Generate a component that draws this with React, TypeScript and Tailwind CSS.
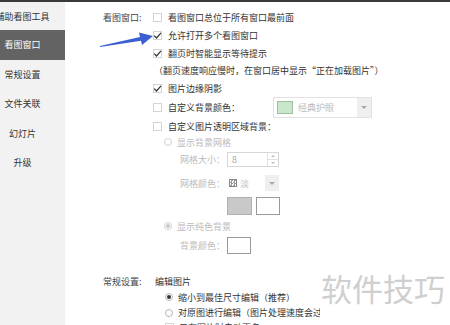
import React from "react";

const font = { fontFamily: '"Noto Sans CJK SC", "Noto Sans", sans-serif' };

const Check = ({ on = false }: { on?: boolean }) => (
    <span className="w-[9px] h-[9px] border border-[#d4d4d4] bg-white shrink-0 flex items-center justify-center">
        {on && (
            <svg width="9" height="9" viewBox="0 0 9 9" className="overflow-visible">
                <polyline points="1.2,4.6 3.5,7 8,1.8" fill="none" stroke="#333" strokeWidth="1.2" />
            </svg>
        )}
    </span>
);

const Radio = ({ on = false, dim = false }: { on?: boolean; dim?: boolean }) => (
    <span className={`w-[8px] h-[8px] rounded-full border shrink-0 flex items-center justify-center bg-white ${dim ? 'border-[#d0d0d0]' : 'border-[#b8b8b8]'}`}>
        {on && <span className={`w-[4px] h-[4px] rounded-full ${dim ? 'bg-[#c8c8c8]' : 'bg-[#333]'}`} />}
    </span>
);

const CheckRow = ({ on, label, h = 'h-[18px]' }: { on?: boolean; label: string; h?: string }) => (
    <div className={`flex items-center gap-[6px] ${h}`}>
        <Check on={on} />
        <span>{label}</span>
    </div>
);

// blue pointer arrow drawn over the page
const Arrow = () => (
    <svg width="70" height="24" viewBox="0 0 70 24" className="absolute left-[96px] top-[26px]">
        <polygon points="4,20 44,11 43,6.5 57,10 46,19 45,14.8 4,21" fill="#3b5fd0" />
    </svg>
);

const navItems = ['辅助看图工具', '看图窗口', '常规设置', '文件关联', '幻灯片', '升级'];

const App = () => {
    return (
        <div className="w-[450px] h-[325px] overflow-hidden bg-white relative text-[9px] leading-none text-[#333]" style={font}>
            <div className="h-[2px] bg-[#3a3a3a]" />
            <div className="flex h-[323px]">
                {/* sidebar */}
                <div className="w-[65px] bg-[#f2f2f2] overflow-hidden shrink-0">
                    <div className="ml-[-20px] w-[85px] pt-[1px]">
                        {navItems.map((n, i) => (
                            <div
                                key={n}
                                className={`flex items-center justify-center ${i === 0 ? 'h-[27px]' : 'h-[29.5px]'} ${i === 1 ? 'bg-[#636363] text-white' : 'text-[#333]'}`}
                            >
                                <span className="whitespace-nowrap">{n}</span>
                            </div>
                        ))}
                    </div>
                </div>

                {/* main */}
                <div className="flex-1 pl-[38px] pt-[6px]">
                    <div className="flex">
                        <div className="w-[50px] h-[18px] flex items-center text-[#444]">看图窗口:</div>
                        <div className="flex flex-col">
                            <CheckRow label="看图窗口总位于所有窗口最前面" />
                            <CheckRow on label="允许打开多个看图窗口" />
                            <CheckRow on label="翻页时智能显示等待提示" />
                            <div className="h-[17px] flex items-center pl-[1px]">（翻页速度响应慢时，在窗口居中显示“正在加载图片”）</div>
                            <CheckRow on label="图片边缘阴影" />
                            <div className="flex items-center h-[21px]">
                                <div className="flex items-center gap-[6px] w-[120px]">
                                    <Check />
                                    <span>自定义背景颜色：</span>
                                </div>
                                <div className="w-[99px] h-[21px] border border-[#e2e2e2] flex items-center">
                                    <span className="ml-[3px] w-[16px] h-[13px] bg-[#c9e8cb] border border-[#9fbfa2]" />
                                    <span className="ml-[5px] flex-1 text-[#bbb]">经典护眼</span>
                                    <span className="w-[14px] h-full bg-[#efefef] flex items-center justify-center">
                                        <span className="border-x-[3px] border-x-transparent border-t-[3px] border-t-[#aaa]" />
                                    </span>
                                </div>
                            </div>
                            <CheckRow label="自定义图片透明区域背景：" h="h-[16px]" />

                            <div className="text-[#bbb] pl-[11px]">
                                <div className="flex items-center gap-[5px] h-[16px]">
                                    <Radio dim />
                                    <span>显示背景网格</span>
                                </div>
                                <div className="pl-[16px]">
                                    <div className="flex items-center h-[15px] mt-[2px]">
                                        <span className="w-[47px]">网格大小：</span>
                                        <div className="w-[52px] h-[15px] border border-[#d6d6d6] flex items-center">
                                            <span className="pl-[4px] flex-1 text-[#aaa]">8</span>
                                            <span className="w-[11px] h-full border-l border-[#e2e2e2] flex flex-col">
                                                <span className="flex-1 flex items-center justify-center border-b border-[#e2e2e2]">
                                                    <span className="border-x-[2px] border-x-transparent border-b-[2px] border-b-[#bbb]" />
                                                </span>
                                                <span className="flex-1 flex items-center justify-center">
                                                    <span className="border-x-[2px] border-x-transparent border-t-[2px] border-t-[#bbb]" />
                                                </span>
                                            </span>
                                        </div>
                                    </div>
                                    <div className="flex items-center h-[16px] mt-[8px]">
                                        <span className="w-[47px]">网格颜色：</span>
                                        <div className="w-[52px] h-[16px] flex items-center">
                                            <span className="ml-[2px] w-[8px] h-[8px] border border-[#888] bg-[repeating-conic-gradient(#999_0_25%,#fff_0_50%)] bg-[length:3px_3px]" />
                                            <span className="ml-[3px] flex-1">淡</span>
                                            <span className="w-[14px] h-full bg-[#efefef] flex items-center justify-center">
                                                <span className="border-x-[3px] border-x-transparent border-t-[3px] border-t-[#aaa]" />
                                            </span>
                                        </div>
                                    </div>
                                    <div className="flex gap-[4px] mt-[6px] pl-[47px]">
                                        <span className="w-[25px] h-[18px] bg-[#c9c9c9] border border-[#b0b0b0]" />
                                        <span className="w-[24px] h-[18px] bg-white border border-[#999]" />
                                    </div>
                                </div>
                                <div className="flex items-center gap-[5px] h-[16px] mt-[3px]">
                                    <Radio on dim />
                                    <span>显示纯色背景</span>
                                </div>
                                <div className="pl-[16px] flex items-center mt-[3px]">
                                    <span className="w-[47px]">背景颜色：</span>
                                    <span className="w-[24px] h-[17px] bg-white border border-[#999]" />
                                </div>
                            </div>
                        </div>
                    </div>

                    <div className="flex mt-[19px]">
                        <div className="w-[52px] h-[16px] flex items-center text-[#444]">常规设置:</div>
                        <div className="flex flex-col">
                            <div className="h-[16px] flex items-center">编辑图片</div>
                            <div className="pl-[10px]">
                                <div className="flex items-center gap-[5px] h-[16px]">
                                    <Radio on />
                                    <span>缩小到最佳尺寸编辑（推荐）</span>
                                </div>
                                <div className="flex items-center gap-[5px] h-[15px]">
                                    <Radio />
                                    <span className="w-[142px] overflow-hidden whitespace-nowrap">对原图进行编辑（图片处理速度会过慢）</span>
                                </div>
                                <div className="flex items-center gap-[5px] h-[14px]">
                                    <Check />
                                    <span>只有图片时自动更名</span>
                                </div>
                            </div>
                        </div>
                    </div>
                </div>
            </div>

            <Arrow />

            <div className="absolute left-[321px] top-[272px] text-[31px] leading-none text-[#cfcfcf]" style={font}>
                软件技巧
            </div>
        </div>
    );
};

export default App;
